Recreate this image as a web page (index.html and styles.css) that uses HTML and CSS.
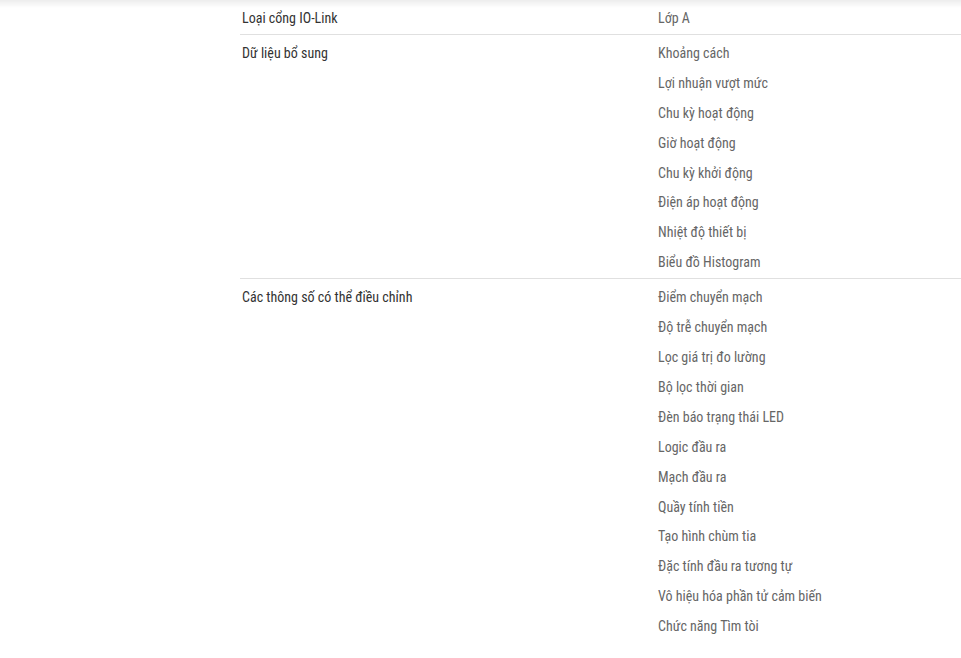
FILE: index.html
```html
<!DOCTYPE html>
<html lang="vi">
<head>
<meta charset="utf-8">
<link rel="stylesheet" href="styles.css">
</head>
<body>
<div class="shade"></div>
<div class="spec">
  <div class="row">
    <div class="label">Loại cổng IO-Link</div>
    <ul class="values">
      <li>Lớp A</li>
    </ul>
  </div>
  <div class="row">
    <div class="label">Dữ liệu bổ sung</div>
    <ul class="values">
      <li>Khoảng cách</li>
      <li>Lợi nhuận vượt mức</li>
      <li>Chu kỳ hoạt động</li>
      <li>Giờ hoạt động</li>
      <li>Chu kỳ khởi động</li>
      <li>Điện áp hoạt động</li>
      <li>Nhiệt độ thiết bị</li>
      <li>Biểu đồ Histogram</li>
    </ul>
  </div>
  <div class="row">
    <div class="label">Các thông số có thể điều chỉnh</div>
    <ul class="values">
      <li>Điểm chuyển mạch</li>
      <li>Độ trễ chuyển mạch</li>
      <li>Lọc giá trị đo lường</li>
      <li>Bộ lọc thời gian</li>
      <li>Đèn báo trạng thái LED</li>
      <li>Logic đầu ra</li>
      <li>Mạch đầu ra</li>
      <li>Quầy tính tiền</li>
      <li>Tạo hình chùm tia</li>
      <li>Đặc tính đầu ra tương tự</li>
      <li>Vô hiệu hóa phần tử cảm biến</li>
      <li>Chức năng Tìm tòi</li>
    </ul>
  </div>
</div>
</body>
</html>
```
FILE: styles.css
```css
html, body {
  margin: 0;
  padding: 0;
  background: #ffffff;
}
body {
  font-family: Roboto, "Noto Sans", sans-serif;
  font-size: 14px;
  font-stretch: 75%;
  color: #333333;
}
.shade {
  position: fixed;
  top: 0;
  left: 0;
  right: 0;
  height: 8px;
  background: linear-gradient(to bottom, rgba(0,0,0,0.07), rgba(0,0,0,0));
  pointer-events: none;
}
.spec {
  margin-left: 240px;
}
.row {
  display: grid;
  grid-template-columns: 418px 1fr;
  border-bottom: 1px solid #e0e0e0;
  padding-top: 4px;
}
.row:last-child {
  border-bottom: none;
}
.label {
  padding-left: 2px;
  line-height: 28px;
  color: #333333;
}
.values {
  list-style: none;
  margin: 0;
  padding: 0;
}
.values li {
  line-height: 29.9px;
  color: #666666;
}
```
